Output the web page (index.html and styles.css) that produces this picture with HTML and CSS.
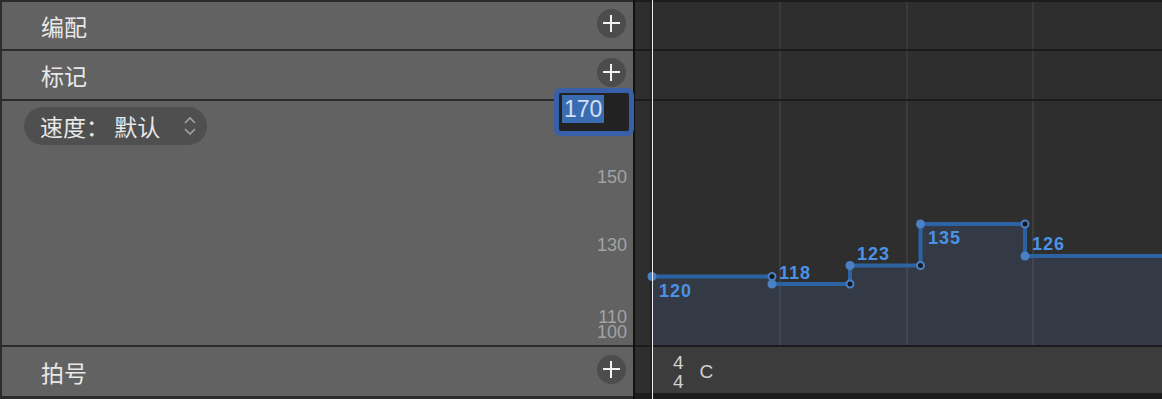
FILE: index.html
```html
<!DOCTYPE html>
<html lang="zh">
<head>
    <meta charset="UTF-8">
    <title>Global Tracks</title>
    <link rel="stylesheet" href="styles.css">
</head>
<body>

<div class="app">
    <!-- track headers -->
    <div class="panel">
        <div class="row">
            <span class="row-title">编配</span>
            <button class="add-btn"><span class="plus"></span></button>
        </div>
        <div class="row">
            <span class="row-title">标记</span>
            <button class="add-btn"><span class="plus"></span></button>
        </div>
        <div class="row tempo-row">
            <div class="tempo-pill">
                <span>速度： 默认</span>
                <svg class="chevrons" width="14" height="22" viewBox="0 0 14 22">
                    <path d="M2 8 L7 3 L12 8" fill="none" stroke="#a3a3a3" stroke-width="1.6"/>
                    <path d="M2 14 L7 19 L12 14" fill="none" stroke="#a3a3a3" stroke-width="1.6"/>
                </svg>
            </div>
            <span class="scale" style="top: 70px;">150</span>
            <span class="scale" style="top: 138px;">130</span>
            <span class="scale" style="top: 210px;">110</span>
            <span class="scale" style="top: 225px;">100</span>
        </div>
        <div class="row">
            <span class="row-title">拍号</span>
            <button class="add-btn"><span class="plus"></span></button>
        </div>

        <!-- value being edited -->
        <div class="edit-box"><span class="edit-sel">170</span></div>
    </div>

    <!-- track lanes -->
    <div class="tracks">
        <div class="lane"></div>
        <div class="lane"></div>
        <div class="lane graph-lane">
            <svg class="graph" width="527" height="244" viewBox="0 0 527 244">
                <polygon fill="#333a45" points="17,175 137,175 137,183 215,183 215,164.5 285.5,164.5 285.5,123 390,123 390,155 527,155 527,244 17,244"/>
                <rect x="144" y="0" width="2" height="244" fill="rgba(255,255,255,0.07)"/>
                <rect x="271" y="0" width="2" height="244" fill="rgba(255,255,255,0.07)"/>
                <rect x="397" y="0" width="2" height="244" fill="rgba(255,255,255,0.07)"/>
                <path d="M17 175.5 H137 V183 H215 V164.5 H285.5 V123 H390 V155 H527" fill="none" stroke="#2c64a3" stroke-width="4"/>
                <g fill="#4a80c6">
                    <circle cx="17" cy="175.5" r="4.5"/>
                    <circle cx="137" cy="183" r="4.5"/>
                    <circle cx="215" cy="164.5" r="4.5"/>
                    <circle cx="285.5" cy="123" r="4.5"/>
                    <circle cx="390" cy="155" r="4.5"/>
                </g>
                <g fill="#141920" stroke="#4a80c6" stroke-width="2">
                    <circle cx="137" cy="175.5" r="3.5"/>
                    <circle cx="215" cy="183" r="3.5"/>
                    <circle cx="285.5" cy="164.5" r="3.5"/>
                    <circle cx="390" cy="123" r="3.5"/>
                </g>
                <g class="tempo-label">
                    <text x="24" y="196">120</text>
                    <text x="144" y="178">118</text>
                    <text x="222" y="159">123</text>
                    <text x="293" y="143">135</text>
                    <text x="397" y="149">126</text>
                </g>
            </svg>
        </div>
        <div class="lane sig-lane">
            <div class="time-sig"><span>4</span><span>4</span></div>
            <span class="key">C</span>
        </div>
    </div>

    <div class="playhead"></div>
</div>

</body>
</html>
```

FILE: styles.css
```css
body {
    margin: 0;
    background: #1e1e1e;
    font-family: "Liberation Sans", "Noto Sans CJK SC", sans-serif;
}
.app {
    position: relative;
    display: flex;
    width: 1162px;
    height: 399px;
    overflow: hidden;
    background: #2a2a2a;
}
.panel {
    position: relative;
    width: 631px;
    border-left: 2px solid #2c2c2c;
    border-right: 2px solid #111;
    display: grid;
    grid-template-rows: 47px 48px 244px 49px;
    row-gap: 2px;
    padding-top: 2px;
    background: #2b2b2b;
}
.row {
    display: flex;
    align-items: center;
    justify-content: space-between;
    background: #626262;
    padding: 0 7px 0 39px;
}
.row-title {
    font-family: "Noto Sans CJK SC", sans-serif;
    font-size: 23px;
    line-height: 1;
    color: #e8e8e8;
    padding-top: 1px;
}
.add-btn {
    width: 29px;
    height: 29px;
    padding: 0;
    border: none;
    border-radius: 50%;
    background: #4c4c4c;
    margin-bottom: 5px;
    position: relative;
}
.plus {
    position: absolute;
    left: 6px;
    top: 13px;
    width: 17px;
    height: 2px;
    background: #f2f2f2;
}
.plus::after {
    content: "";
    position: absolute;
    left: 7px;
    top: -7px;
    width: 2px;
    height: 17px;
    background: #f2f2f2;
}
.tempo-row {
    position: relative;
    align-items: flex-start;
    padding: 6px 0 0 22px;
}
.tempo-pill {
    display: flex;
    align-items: center;
    gap: 23px;
    height: 38px;
    padding: 0 10px 0 16px;
    border-radius: 19px;
    background: #4f4f4f;
    font-family: "Noto Sans CJK SC", sans-serif;
    font-size: 23px;
    color: #e8e8e8;
}
.chevrons {
    display: block;
}
.scale {
    position: absolute;
    right: 6px;
    font-size: 18px;
    line-height: 12px;
    height: 12px;
    color: #a3a3a3;
}
.edit-box {
    position: absolute;
    left: 552px;
    top: 88px;
    width: 70px;
    height: 38px;
    border: 5px solid #3a5fa9;
    border-radius: 7px;
    background: #222;
}
.edit-sel {
    display: inline-block;
    margin: 2px 0 0 3px;
    padding: 0 2px;
    height: 28px;
    line-height: 29px;
    font-size: 23px;
    color: #d4e0f2;
    background: #3a6cb2;
}
.tracks {
    flex: 1;
    display: grid;
    grid-template-rows: 47px 48px 244px 46px;
    row-gap: 2px;
    padding-top: 2px;
    background: #1c1c1c;
}
.lane {
    background:
        linear-gradient(#232323, #232323) 15px 0 / 2px 100% no-repeat,
        linear-gradient(#393939, #393939) 144px 0 / 2px 100% no-repeat,
        linear-gradient(#393939, #393939) 271px 0 / 2px 100% no-repeat,
        linear-gradient(#393939, #393939) 397px 0 / 2px 100% no-repeat,
        #2e2e2e;
}
.graph-lane {
    background:
        linear-gradient(#232323, #232323) 15px 0 / 2px 100% no-repeat,
        #2e2e2e;
}
.graph {
    display: block;
}
.tempo-label {
    font-family: "Liberation Sans", sans-serif;
    font-size: 18px;
    font-weight: bold;
    letter-spacing: 1px;
    fill: #4a92e4;
}
.sig-lane {
    display: flex;
    align-items: center;
    gap: 16px;
    padding-left: 38px;
    background:
        linear-gradient(#232323, #232323) 15px 0 / 2px 100% no-repeat,
        linear-gradient(#2e2e2e, #2e2e2e) 0 0 / 17px 100% no-repeat,
        #3c3c3c;
}
.time-sig {
    display: flex;
    flex-direction: column;
    font-size: 19px;
    line-height: 19px;
    color: #d2d2d2;
    margin-top: 3px;
}
.key {
    font-size: 19px;
    color: #d2d2d2;
    margin-top: 4px;
}
.playhead {
    position: absolute;
    left: 652px;
    top: 0;
    width: 1px;
    height: 399px;
    background: #ececec;
}
```
